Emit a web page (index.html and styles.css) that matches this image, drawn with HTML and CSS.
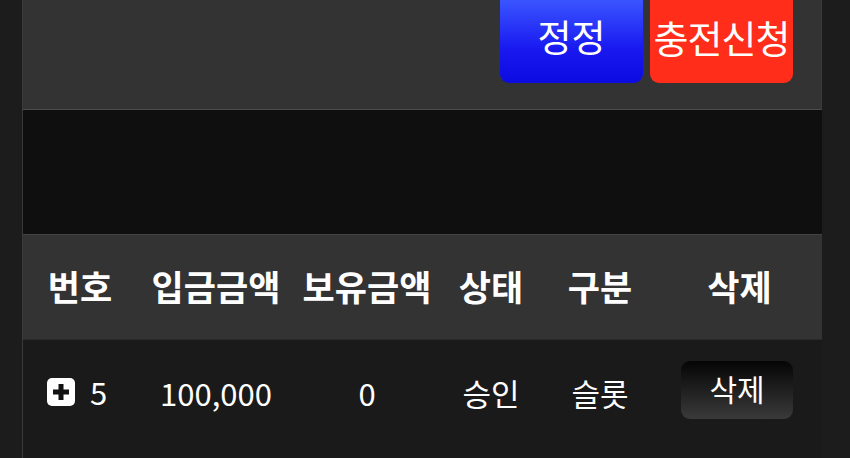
FILE: index.html
```html
<!DOCTYPE html>
<html>
<head>
  <title>충전신청</title>
  <link rel="stylesheet" href="styles.css">
</head>
<body>
  <div class="page">
    <div class="top-panel">
      <button class="btn btn-blue">정정</button>
      <button class="btn btn-red">충전신청</button>
    </div>
    <div class="spacer"></div>
    <table class="list">
      <thead>
        <tr>
          <th class="c-no">번호</th>
          <th class="c-in">입금금액</th>
          <th class="c-have">보유금액</th>
          <th class="c-state">상태</th>
          <th class="c-type">구분</th>
          <th class="c-del">삭제</th>
        </tr>
      </thead>
      <tbody>
        <tr>
          <td class="c-no">
            <span class="no-cell">
              <svg class="plus" width="28" height="28" viewBox="0 0 28 28">
                <rect x="0" y="0" width="28" height="28" rx="5" fill="#fff"/>
                <rect x="6" y="11.5" width="16" height="5" fill="#111"/>
                <rect x="11.5" y="6" width="5" height="16" fill="#111"/>
              </svg>
              5
            </span>
          </td>
          <td class="c-in">100,000</td>
          <td class="c-have">0</td>
          <td class="c-state">승인</td>
          <td class="c-type">슬롯</td>
          <td class="c-del"><button class="del-btn">삭제</button></td>
        </tr>
      </tbody>
    </table>
  </div>
</body>
</html>
```

FILE: styles.css
```css
html, body { margin: 0; padding: 0; }
body { background: #1c1c1c; font-family: "Noto Sans CJK KR", "Noto Sans", sans-serif; color: #fff; overflow: hidden; }
.page { width: 800px; margin-left: 22px; height: 458px; background: #1a1a1a; border-left: 1px solid #3a3a3a; box-sizing: border-box; }
.top-panel { height: 109px; background: #333; border-right: 1px solid #3a3a3a; border-bottom: 1px solid #4c4c4c; display: flex; justify-content: flex-end; align-items: flex-start; gap: 7px; padding-right: 28px; box-sizing: content-box; }
.btn { width: 143px; height: 83px; border: none; border-radius: 0 0 9px 9px; color: #fff; font-family: inherit; font-size: 37px; line-height: 1; padding: 0 0 10px; display: flex; align-items: center; justify-content: center; white-space: nowrap; }
.btn-blue { background: linear-gradient(#3a55ff, #1818f0 60%, #0c0ce0); }
.btn-red { background: #ff2d1a; font-size: 38px; letter-spacing: -1px; }
.spacer { height: 124px; background: #0f0f0f; }
.list { width: 799px; border-collapse: collapse; table-layout: fixed; }
.list thead tr { background: #333; border-top: 1px solid #444; border-bottom: 1px solid #2a2a2a; }
.list th { height: 100px; font-size: 35px; font-weight: 700; padding: 0 0 4px; white-space: nowrap; }
.list tbody tr { background: #1a1a1a; }
.list td { height: 100px; text-align: center; font-size: 31px; padding: 0 0 8px; vertical-align: middle; }
.c-no { width: 114px; }
.c-in { width: 158px; }
.c-have { width: 144px; }
.c-state { width: 104px; }
.c-type { width: 114px; }
.c-del { width: 165px; }
.list td.c-del { padding: 0 5px 12px 0; }
.list td.c-no { padding-right: 6px; }
.no-cell { display: inline-flex; align-items: center; gap: 15px; }
.plus { display: block; }
.del-btn { width: 112px; height: 58px; border: none; border-radius: 9px; background: linear-gradient(#050505, #2a2a2a 70%, #3a3a3a); color: #fff; font-family: inherit; font-size: 30px; padding: 0 0 4px; }
```
